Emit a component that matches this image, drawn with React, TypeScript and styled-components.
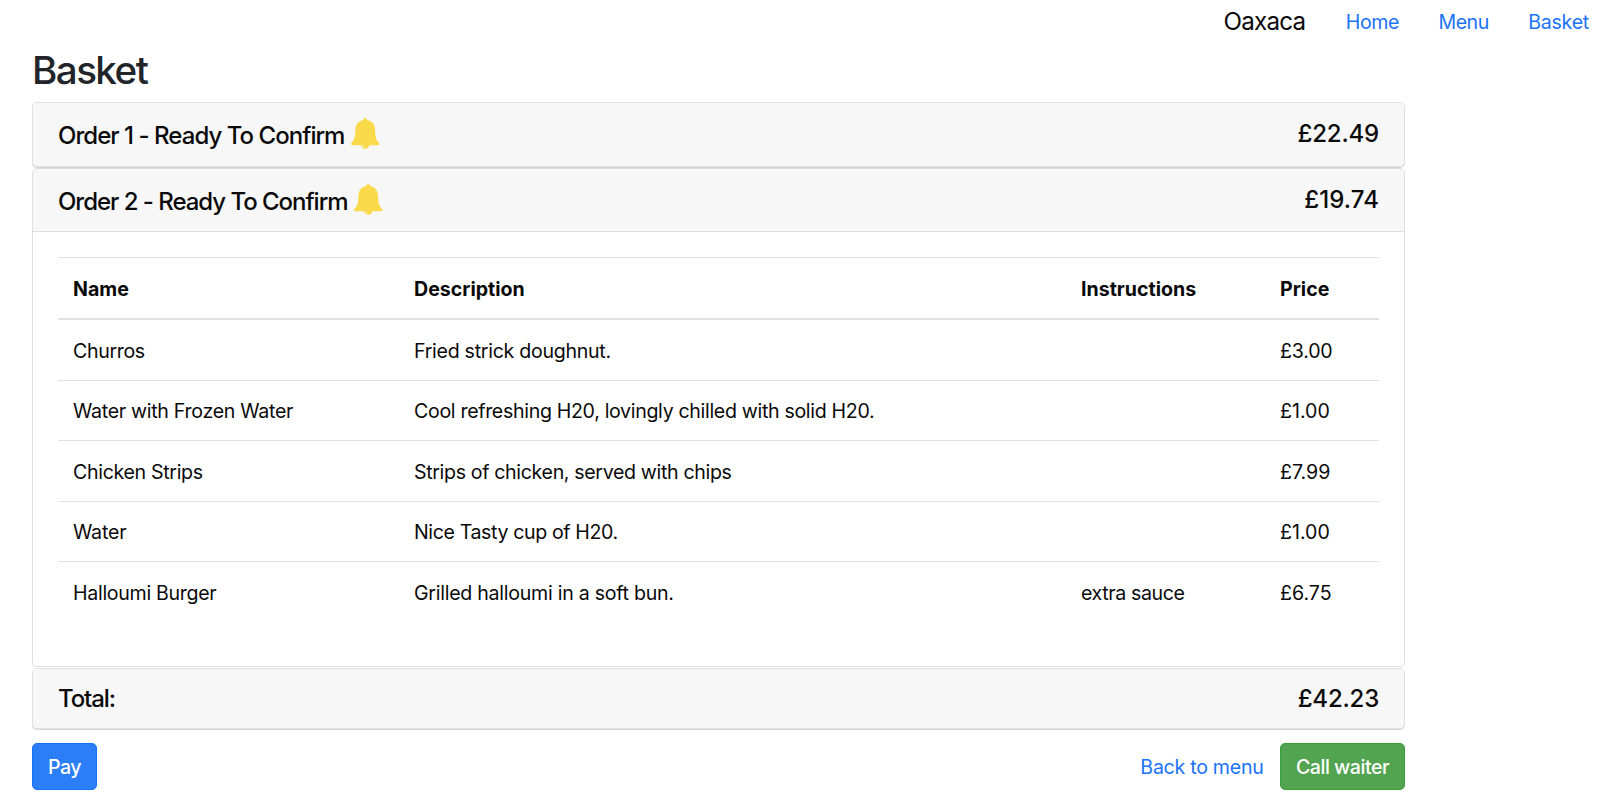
import React from "react";
import styled, { createGlobalStyle } from "styled-components";

const GlobalStyle = createGlobalStyle`
  *, *::before, *::after { box-sizing: border-box; }
  body {
    margin: 0;
    background: #fff;
    color: #0a0a0a;
    font-family: Inter, "Liberation Sans", sans-serif;
    font-size: 19.6px;
    line-height: 30px;
  }
`;

const Page = styled.div`
  width: 1600px;
  height: 811px;
  overflow: hidden;
`;

const Nav = styled.nav`
  display: flex;
  justify-content: flex-end;
  align-items: center;
  gap: 39.5px;
  height: 44px;
  padding-right: 11px;
`;

const Text = styled.span<{ $ls?: number }>`
  white-space: nowrap;
  letter-spacing: ${(p) => p.$ls ?? 0}px;
`;

const Brand = styled(Text)`
  margin-right: 1px;
  font-size: 24.2px;
`;

const Link = styled.a<{ $ls?: number }>`
  color: #1a73f8;
  text-decoration: none;
  white-space: nowrap;
  letter-spacing: ${(p) => p.$ls ?? 0}px;
`;

const Main = styled.main`
  width: 1373px;
  margin-left: 32px;
`;

const Title = styled.h2`
  margin: 0;
  height: 58px;
  font-size: 38.6px;
  font-weight: 500;
  line-height: 52px;
  letter-spacing: -1.55px;
  color: #212529;
`;

const Card = styled.section<{ $shadow?: boolean }>`
  margin-bottom: 1px;
  border: 1px solid #dfdfdf;
  border-radius: 5px;
  background: #fff;
  overflow: hidden;
  box-shadow: ${(p) => (p.$shadow ? "0 1px 0 #d6d6d6" : "none")};
`;

const CardHeader = styled.header<{ $height: number; $top?: number; $open?: boolean }>`
  display: flex;
  justify-content: space-between;
  height: ${(p) => p.$height}px;
  padding: ${(p) => p.$top ?? 14}px 25px 0;
  background: #f7f7f7;
  border-bottom: ${(p) => (p.$open ? "1px solid #dfdfdf" : "0")};
  font-size: 24px;
  font-weight: 500;
  line-height: 34px;
`;

const Heading = styled.h5<{ $top?: number }>`
  display: flex;
  align-items: flex-start;
  gap: 7px;
  margin: 0;
  padding-top: ${(p) => p.$top ?? 0}px;
  font-size: inherit;
  font-weight: 500;
`;

const Bell = styled.svg`
  width: 28.5px;
  height: 31px;
  margin-top: -1px;
`;

const CardBody = styled.div`
  height: 434px;
  padding: 25px 25px 0;
`;

const Table = styled.table`
  width: 100%;
  table-layout: fixed;
  border-collapse: separate;
  border-spacing: 0;
`;

const HeadCell = styled.th`
  height: 63px;
  padding: 1px 15px 0;
  text-align: left;
  font-weight: 700;
  border-top: 1px solid #dee2e6;
  border-bottom: 2px solid #dee2e6;
`;

const Cell = styled.td<{ $first?: boolean; $height: number }>`
  height: ${(p) => p.$height}px;
  padding: 1px 15px 0;
  border-top: ${(p) => (p.$first ? "0" : "1px solid #dee2e6")};
`;

const Actions = styled.div`
  display: flex;
  align-items: center;
  justify-content: space-between;
  margin-top: 14px;
`;

const ActionGroup = styled.div`
  display: flex;
  align-items: center;
  gap: 16.5px;
`;

const Button = styled.button<{ $bg: string; $edge: string; $width: number; $ls?: number }>`
  width: ${(p) => p.$width}px;
  height: 47px;
  padding: 0;
  border: 1px solid ${(p) => p.$edge};
  border-radius: 5px;
  background: ${(p) => p.$bg};
  color: #fff;
  font: inherit;
  font-weight: 500;
  letter-spacing: ${(p) => p.$ls ?? 0}px;
`;

const BellIcon = () => (
  <Bell viewBox="0 0 28 31" preserveAspectRatio="none" aria-hidden="true">
    <circle cx="14" cy="26.5" r="4.2" fill="#fada4a" />
    <path
      d="M14 0c1.100 0 1.700.8 1.800 1.900C20.600 2.800 23.400 6.300 23.600 11l.3 5c.2 4 1.300 6.800 3.300 8.500.6.600.8 1 .8 1.500 0 .8-.5 1.200-1.300 1.200H1.300C.5 27.200 0 26.800 0 26c0-.5.2-.9.8-1.500 2-1.700 3.100-4.500 3.300-8.500l.3-5C4.600 6.300 7.400 2.800 12.200 1.900 12.300.8 12.900 0 14 0z"
      fill="#fada4a"
    />
    <path d="M11.500 27.500c.2 1 .9 1.500 1.900 1.700" fill="none" stroke="#fdf0b0" strokeWidth="1" strokeLinecap="round" />
  </Bell>
);

const columns = [
  { label: "Name", width: 341 },
  { label: "Description", width: 667 },
  { label: "Instructions", width: 199 },
  { label: "Price", width: 114 },
];

type Entry = { text: string; ls?: number };

const rowHeights = [60, 60, 61, 60, 61];

const rows: Entry[][] = [
  [{ text: "Churros", ls: -0.35 }, { text: "Fried strick doughnut.", ls: -0.29 }, { text: "" }, { text: "£3.00", ls: -0.2 }],
  [
    { text: "Water with Frozen Water", ls: -0.3 },
    { text: "Cool refreshing H20, lovingly chilled with solid H20.", ls: -0.33 },
    { text: "" },
    { text: "£1.00" },
  ],
  [
    { text: "Chicken Strips", ls: -0.33 },
    { text: "Strips of chicken, served with chips", ls: -0.35 },
    { text: "" },
    { text: "£7.99" },
  ],
  [{ text: "Water", ls: -0.2 }, { text: "Nice Tasty cup of H20.", ls: -0.39 }, { text: "" }, { text: "£1.00" }],
  [
    { text: "Halloumi Burger", ls: -0.31 },
    { text: "Grilled halloumi in a soft bun.", ls: -0.27 },
    { text: "extra sauce", ls: -0.4 },
    { text: "£6.75" },
  ],
];

export default function App() {
  return (
    <Page>
      <GlobalStyle />
      <Nav>
        <Brand $ls={-0.8}>Oaxaca</Brand>
        <Link $ls={-0.4}>Home</Link>
        <Link $ls={-0.55}>Menu</Link>
        <Link $ls={-0.25}>Basket</Link>
      </Nav>
      <Main>
        <Title>Basket</Title>
        <Card $shadow>
          <CardHeader $height={63}>
            <Heading $top={2}>
              <Text $ls={-0.96}>Order 1 - Ready To Confirm</Text>
              <BellIcon />
            </Heading>
            <Text $ls={-0.2}>£22.49</Text>
          </CardHeader>
        </Card>
        <Card>
          <CardHeader $height={63} $open>
            <Heading $top={2}>
              <Text $ls={-1.03}>Order 2 - Ready To Confirm</Text>
              <BellIcon />
            </Heading>
            <Text $ls={0.1}>£19.74</Text>
          </CardHeader>
          <CardBody>
            <Table>
              <colgroup>
                {columns.map((c) => (
                  <col key={c.label} width={c.width} />
                ))}
              </colgroup>
              <thead>
                <tr>
                  {columns.map((c) => (
                    <HeadCell key={c.label}>{c.label}</HeadCell>
                  ))}
                </tr>
              </thead>
              <tbody>
                {rows.map((row, r) => (
                  <tr key={r}>
                    {row.map((entry, i) => (
                      <Cell key={i} $first={r === 0} $height={rowHeights[r]}>
                        <Text $ls={entry.ls}>{entry.text}</Text>
                      </Cell>
                    ))}
                  </tr>
                ))}
              </tbody>
            </Table>
          </CardBody>
        </Card>
        <Card $shadow>
          <CardHeader $height={59} $top={13}>
            <Heading>
              <Text $ls={-1.1}>Total:</Text>
            </Heading>
            <Text $ls={-0.2}>£42.23</Text>
          </CardHeader>
        </Card>
        <Actions>
          <Button $bg="#2b7ef8" $edge="#1473f6" $width={65} $ls={-0.5}>
            Pay
          </Button>
          <ActionGroup>
            <Link $ls={-0.28}>Back to menu</Link>
            <Button $bg="#52a450" $edge="#3b9e3b" $width={125} $ls={-0.48}>
              Call waiter
            </Button>
          </ActionGroup>
        </Actions>
      </Main>
    </Page>
  );
}
